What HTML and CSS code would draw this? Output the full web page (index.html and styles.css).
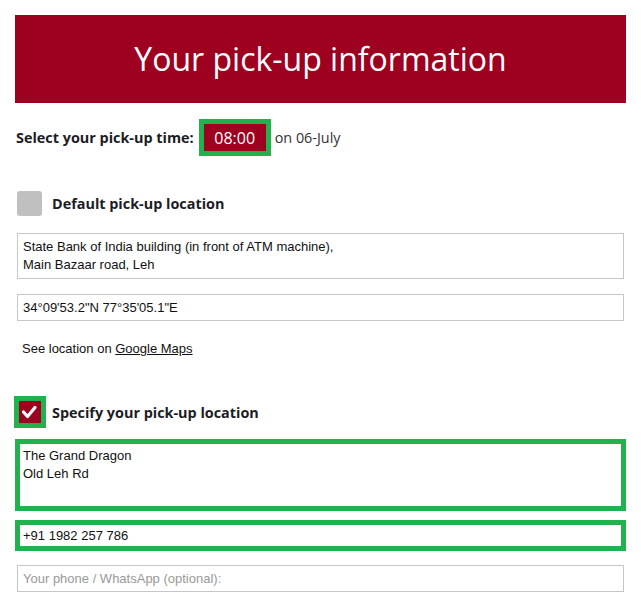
FILE: index.html
```html
<!DOCTYPE html>
<html lang="en">
<head>
<meta charset="utf-8">
<title>Your pick-up information</title>
<link rel="stylesheet" href="styles.css">
</head>
<body>
<div class="page">
  <header class="banner">Your pick-up information</header>
  <div class="content">
    <div class="time-row">
      <span class="label">Select your pick-up time:</span>
      <span class="time">08:00</span>
      <span class="date">on 06-July</span>
    </div>

    <div class="check-row default-row">
      <span class="check"></span>
      <span class="label">Default pick-up location</span>
    </div>
    <textarea class="field area" readonly>State Bank of India building (in front of ATM machine),
Main Bazaar road, Leh</textarea>
    <input class="field line" type="text" value="34°09'53.2&quot;N 77°35'05.1&quot;E" readonly>
    <p class="maps">See location on <a href="#">Google Maps</a></p>

    <div class="check-row specify-row">
      <span class="check checked">
        <svg viewBox="0 0 22 22" width="22" height="22" aria-hidden="true"><polyline points="4.5,11 8.5,15.5 16,6.5" fill="none" stroke="#fff" stroke-width="3.2" stroke-linecap="round" stroke-linejoin="round"/></svg>
      </span>
      <span class="label">Specify your pick-up location</span>
    </div>
    <textarea class="field area tall highlight" readonly>The Grand Dragon
Old Leh Rd</textarea>
    <input class="field line highlight" type="text" value="+91 1982 257 786" readonly>
    <input class="field line" type="text" placeholder="Your phone / WhatsApp (optional):">
  </div>
</div>
</body>
</html>
```

FILE: styles.css
```css
* { box-sizing: border-box; }
html, body { margin: 0; padding: 0; background: #fff; }
body {
  font-family: "Open Sans", "Liberation Sans", sans-serif;
  color: #1c1c24;
}
.page { padding: 15px; }
.banner {
  height: 88px;
  background: #9e0020;
  color: #fff;
  font-size: 32px;
  display: flex;
  align-items: center;
  justify-content: center;
  padding-bottom: 2px;
}
.content {
  padding: 0 2px;
  display: flex;
  flex-direction: column;
}
.label { font-weight: 700; font-size: 14.4px; color: #1c1c24; }
.time-row {
  display: flex;
  align-items: center;
  margin-top: 16px;
  margin-left: -1px;
  height: 37px;
}
.time {
  margin-left: 5px;
  width: 72px;
  height: 37px;
  border: 5px solid #22b14c;
  background: #9e0020;
  color: #fff;
  font-size: 16px;
  display: flex;
  align-items: center;
  justify-content: center;
}
.date { margin-left: 4px; font-size: 14.4px; color: #333; }
.highlight {
  border: 3px solid #22b14c !important;
  box-shadow: 0 0 0 2px #22b14c;
}
.check-row {
  display: flex;
  align-items: center;
  gap: 10px;
}
.default-row { margin-top: 35px; }
.specify-row { margin-top: 40px; gap: 6px; }
.check {
  width: 25px;
  height: 25px;
  border-radius: 3px;
  background: #c0c0c0;
  flex: none;
}
.check.checked {
  width: 32px;
  height: 32px;
  margin-left: -3px;
  border: 5px solid #22b14c;
  background: #9e0020;
  border-radius: 0;
  display: flex;
  align-items: center;
  justify-content: center;
}
.check.checked svg { width: 22px; height: 22px; }
.field {
  display: block;
  width: 100%;
  margin: 0;
  font-family: "Liberation Sans", Arial, sans-serif;
  font-size: 13px;
  line-height: 18px;
  color: #111;
  border: 1px solid #c3c6cc;
  border-radius: 0;
  background: #fff;
  outline: none;
  resize: none;
  overflow: hidden;
}
.area {
  height: 46px;
  padding: 4px 5px;
  margin-top: 17px;
}
.area.tall {
  height: 68px;
  padding: 3px 3px;
  margin-top: 13px;
}
.line {
  height: 27px;
  padding: 0 5px;
  margin-top: 15px;
}
.line.highlight { padding: 0 3px; margin-top: 13px; }
.line.highlight + .line { margin-top: 16px; }
.field::placeholder { color: #999; opacity: 1; }
.maps {
  margin: 20px 0 0 5px;
  font-family: "Liberation Sans", Arial, sans-serif;
  font-size: 13px;
  line-height: 15px;
  color: #111;
}
.maps a { color: #111; text-decoration: underline; }
```
